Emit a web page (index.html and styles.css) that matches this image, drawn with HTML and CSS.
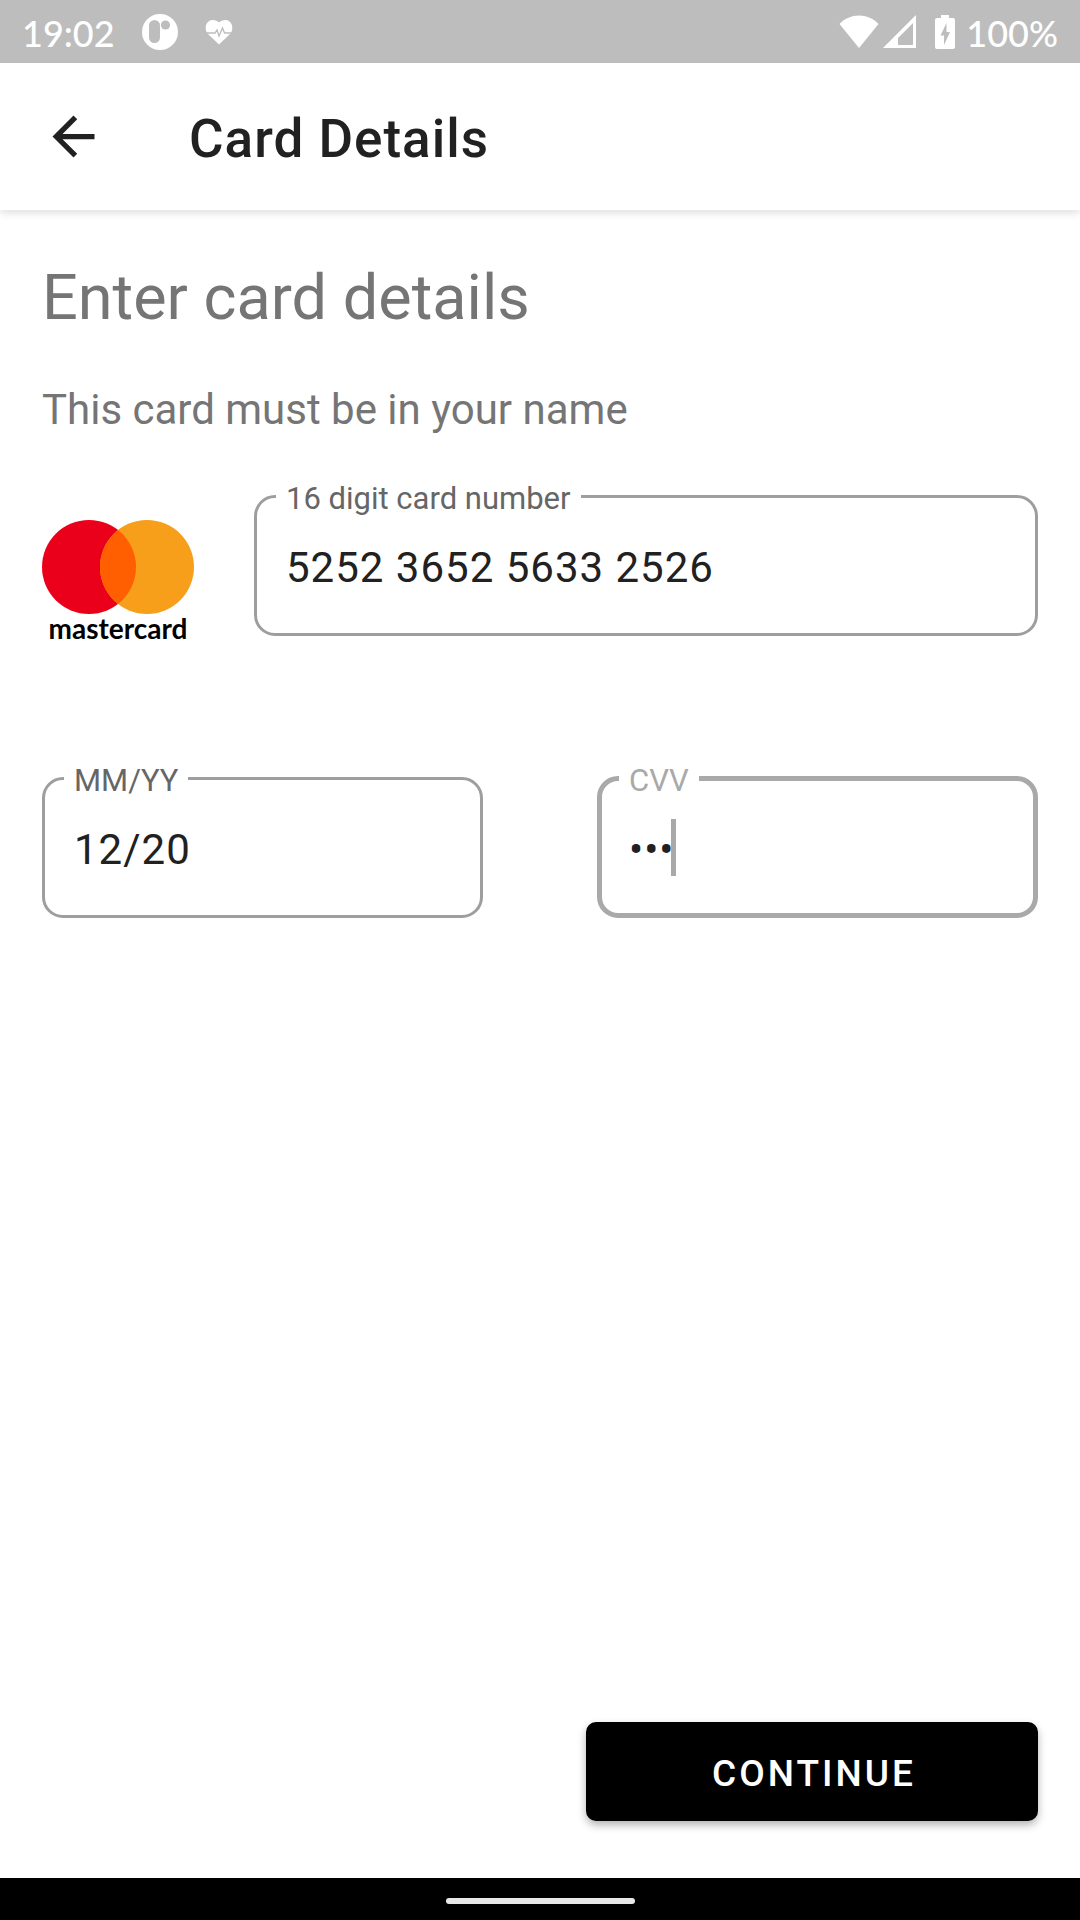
FILE: index.html
```html
<!DOCTYPE html>
<html lang="en">
<head>
  <meta charset="utf-8">
  <meta name="viewport" content="width=device-width, initial-scale=1">
  <title>Card Details</title>
  <link rel="stylesheet" href="styles.css">
</head>
<body>
  <div class="status-bar">
    <div class="status-group status-left">
      <span class="status-text">19:02</span>
      <svg class="icon-app" width="36" height="38" viewBox="0 0 36 38" aria-hidden="true">
        <circle cx="18" cy="19" r="18" fill="#fff"/>
        <rect x="7" y="7" width="11" height="23" rx="5.5" fill="#bdbdbd"/>
        <circle cx="23.5" cy="12" r="4.6" fill="#bdbdbd"/>
      </svg>
      <svg width="28" height="26" viewBox="0 0 28 26" aria-hidden="true">
        <path d="M14 25.500 3 15C-1 11 0 1.500 7.500 1c3 0 5 1 6.500 2.500C15.500 2 17.500 1 20.500 1 28 1.500 29 11 25 15z" fill="#fff"/>
        <path d="M1 14h9l2-3 2 6 3.500-8 2 5H27" fill="none" stroke="#bdbdbd" stroke-width="1.300"/>
      </svg>
    </div>
    <div class="status-group status-right">
      <svg width="40" height="34" viewBox="0 0 40 34" aria-hidden="true">
        <path d="M20 33 .5 9C11-2.500 29-2.500 39.500 9z" fill="#fff"/>
      </svg>
      <svg width="34" height="34" viewBox="0 0 34 34" aria-hidden="true">
        <path d="M0 33 33 0v33zM15 30h15V8L15 23z" fill="#fff" fill-rule="evenodd"/>
      </svg>
      <svg class="icon-battery" width="20" height="34" viewBox="0 0 20 34" aria-hidden="true">
        <path d="M6 0h8v3h4q2 0 2 2v27q0 2-2 2H2q-2 0-2-2V5q0-2 2-2h4z" fill="#fff"/>
        <path d="M11.500 8v9H15L9 30v-9.500H5.500z" fill="#bdbdbd"/>
      </svg>
      <span class="status-text">100%</span>
    </div>
  </div>

  <header class="app-bar">
    <button class="back" type="button" aria-label="Back">
      <svg width="63" height="63" viewBox="0 0 24 24" aria-hidden="true">
        <path d="M20 11H7.830l5.590-5.590L12 4l-8 8 8 8 1.410-1.410L7.830 13H20v-2z" fill="#212121"/>
      </svg>
    </button>
    <h1 class="app-title">Card Details</h1>
  </header>

  <main class="content">
    <h2 class="heading">Enter card details</h2>
    <p class="subheading">This card must be in your name</p>

    <form class="card-form">
      <div class="number-row">
        <div class="brand">
          <svg class="brand-mark" width="152" height="94" viewBox="0 0 152 94" aria-hidden="true">
            <circle cx="47" cy="47" r="47" fill="#eb001b"/>
            <circle cx="105" cy="47" r="47" fill="#f79e1b"/>
            <path d="M76 10a47 47 0 0 1 0 74 47 47 0 0 1 0-74z" fill="#ff5f00"/>
          </svg>
          <span class="brand-name">mastercard</span>
        </div>
        <fieldset class="field">
          <legend class="field-legend"><label for="number">16 digit card number</label></legend>
          <input class="field-input" id="number" type="text" inputmode="numeric" value="5252 3652 5633 2526">
        </fieldset>
      </div>
      <div class="detail-row">
        <fieldset class="field">
          <legend class="field-legend"><label for="expiry">MM/YY</label></legend>
          <input class="field-input" id="expiry" type="text" value="12/20">
        </fieldset>
        <fieldset class="field field-active">
          <legend class="field-legend"><label for="cvv">CVV</label></legend>
          <input class="field-input" id="cvv" type="password" value="252">
          <span class="caret"></span>
        </fieldset>
      </div>
      <div class="actions">
        <button class="continue" type="submit">CONTINUE</button>
      </div>
    </form>
  </main>

  <div class="nav-bar"><span class="nav-handle"></span></div>
</body>
</html>
```
FILE: styles.css
```css
* {
  box-sizing: border-box;
}

body {
  margin: 0;
  min-height: 100vh;
  display: flex;
  flex-direction: column;
  background: #fff;
  color: #212121;
  font-family: Roboto, sans-serif;
}

svg {
  display: block;
  flex: none;
}

.status-bar {
  position: relative;
  z-index: 1;
  display: flex;
  justify-content: space-between;
  align-items: center;
  height: 63px;
  padding: 0 22px;
  background: #bdbdbd;
}

.status-group {
  display: flex;
  align-items: center;
}

.status-left {
  gap: 27px;
}

.status-right {
  gap: 4px;
}

.icon-battery {
  margin: 0 7px 0 14px;
}

.status-text {
  padding-top: 2px;
  color: #fff;
  font: 500 36px/44px Lato, sans-serif;
}

.app-bar {
  display: flex;
  align-items: center;
  gap: 84px;
  height: 147px;
  padding: 0 42px;
  background: #fff;
  box-shadow: 0 3px 8px rgba(0, 0, 0, 0.13);
}

.back {
  padding: 0;
  border: 0;
  background: none;
}

.app-title {
  margin: 0;
  padding-top: 4px;
  font-size: 53px;
  line-height: 62px;
  font-weight: 500;
  letter-spacing: 1px;
}

.content {
  flex: 1;
  display: flex;
  flex-direction: column;
  padding: 51px 42px 57px;
}

.heading {
  margin: 0;
  color: #757575;
  font-size: 63px;
  line-height: 74px;
  font-weight: 400;
}

.subheading {
  margin: 50px 0 41px;
  color: #757575;
  font-size: 42px;
  line-height: 50px;
}

.card-form {
  flex: 1;
  display: flex;
  flex-direction: column;
}

.number-row {
  display: flex;
  align-items: flex-start;
  gap: 60px;
}

.brand {
  padding-top: 44px;
  text-align: center;
}

.brand-name {
  display: block;
  color: #000;
  font: 700 28px/28px Lato, sans-serif;
}

.detail-row {
  display: flex;
  gap: 114px;
  margin-top: 116px;
}

.field {
  position: relative;
  flex: 1;
  min-width: 0;
  height: 160px;
  margin: 0;
  padding: 0 19px;
  border: 3px solid #9e9e9e;
  border-radius: 21px;
}

.field-legend {
  padding: 4px 10px 0;
  color: #666;
  font-size: 31px;
  line-height: 37px;
}

.field-legend label {
  display: block;
}

.field-input {
  display: block;
  width: 100%;
  height: 100px;
  padding: 0 10px;
  border: 0;
  outline: 0;
  background: none;
  color: #212121;
  font-family: inherit;
  font-size: 42px;
  letter-spacing: 1px;
}

.field-active {
  padding: 0 17px;
  border: 5px solid #a9a9a9;
}

.field-active .field-legend {
  color: #a9a9a9;
}

.caret {
  position: absolute;
  left: 69px;
  bottom: 37px;
  width: 5px;
  height: 57px;
  background: #a9a9a9;
}

.actions {
  display: flex;
  justify-content: flex-end;
  margin-top: auto;
}

.continue {
  min-width: 452px;
  height: 99px;
  padding: 4px 0 0 4px;
  border: 0;
  border-radius: 10px;
  background: #000;
  color: #fff;
  font: 500 37px/44px Roboto, sans-serif;
  letter-spacing: 3px;
  box-shadow: 0 4px 8px rgba(0, 0, 0, 0.3);
}

.nav-bar {
  display: flex;
  align-items: center;
  justify-content: center;
  height: 42px;
  padding-top: 4px;
  background: #000;
}

.nav-handle {
  width: 189px;
  height: 6px;
  border-radius: 3px;
  background: #e8e8e8;
}
```
